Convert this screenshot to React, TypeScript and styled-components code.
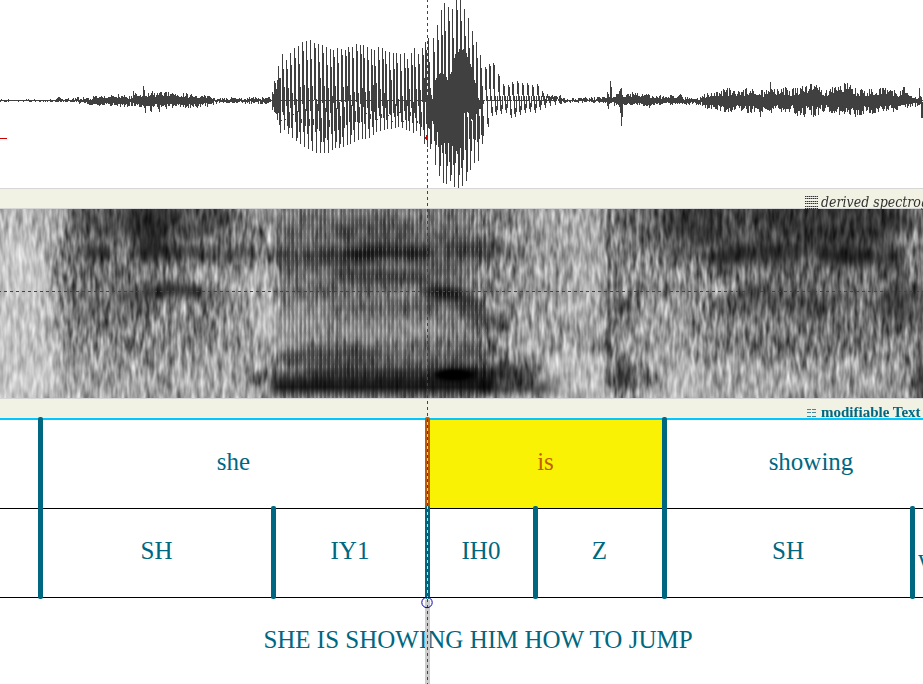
import React from "react";
import styled, { createGlobalStyle } from "styled-components";

const TEAL = "#006780";
const VIEW = 923;
const CURSOR = 427;
const pct = (n: number) => `${(n / VIEW) * 100}%`;

const GlobalStyle = createGlobalStyle`
  * { box-sizing: border-box; }
  body { margin: 0; background: #fff; overflow: hidden; }
`;

const Editor = styled.main`
  position: relative;
  display: flex;
  flex-direction: column;
  min-height: 100vh;
  overflow: hidden;
  background: #fff;
  color: ${TEAL};
  font-family: "Liberation Serif", serif;
`;

const Panel = styled.section<{ $height: number }>`
  position: relative;
  height: ${(p) => p.$height}px;
  flex: none;
`;

const Drawing = styled.svg`
  display: block;
  width: 100%;
  height: 100%;
`;

const GrainLayer = styled.g`
  mix-blend-mode: overlay;
`;

const Strip = styled.header<{ $framed?: boolean }>`
  position: relative;
  z-index: 1;
  display: flex;
  align-items: center;
  gap: 3px;
  height: ${(p) => (p.$framed ? 21 : 20)}px;
  padding-left: ${(p) => (p.$framed ? pct(805) : pct(807))};
  background: #f2f2e4;
  border-top: 1px solid #d6d6d6;
  border-bottom: ${(p) => (p.$framed ? "1px solid #d6d6d6" : "0")};
`;

const StripTitle = styled.h2<{ $derived?: boolean }>`
  margin: 0;
  flex: none;
  padding-top: ${(p) => (p.$derived ? 6 : 7)}px;
  padding-left: ${(p) => (p.$derived ? 0 : 1)}px;
  white-space: nowrap;
  line-height: 16px;
  font-size: ${(p) => (p.$derived ? 14 : 15)}px;
  font-style: ${(p) => (p.$derived ? "italic" : "normal")};
  font-weight: ${(p) => (p.$derived ? 400 : 700)};
  font-family: ${(p) => (p.$derived ? '"DejaVu Serif Condensed", "DejaVu Serif", serif' : '"Liberation Serif", serif')};
  color: ${(p) => (p.$derived ? "#333" : TEAL)};
`;

const StripIcon = styled.svg`
  flex: none;
  margin-top: 7px;
`;

const Tiers = styled.section`
  display: flex;
  flex-direction: column;
  flex: 1;
  border-top: 2px solid #00c8ff;
`;

const Tier = styled.div<{ $columns: number[] }>`
  display: grid;
  grid-template-columns: ${(p) => p.$columns.map(pct).join(" ")};
  height: 89px;
  border-bottom: 1px solid #000;
  &:last-child {
    flex: 1;
    height: auto;
    border-bottom: 0;
  }
`;

const Interval = styled.div<{ $selected?: boolean; $low?: boolean }>`
  position: relative;
  display: flex;
  justify-content: ${(p) => (p.$low ? "flex-start" : "center")};
  padding-top: ${(p) => (p.$low ? 36 : 28)}px;
  padding-left: ${(p) => (p.$low ? 6 : 0)}px;
  font-size: 25px;
  line-height: 28px;
  white-space: nowrap;
  background: ${(p) => (p.$selected ? "#faf205" : "transparent")};
  color: ${(p) => (p.$selected ? "#c06000" : TEAL)};
`;

const Boundary = styled.i<{ $active?: boolean }>`
  position: absolute;
  z-index: 1;
  left: -2px;
  top: -3px;
  bottom: -2px;
  width: 5px;
  border-radius: 2px;
  background: ${(p) => (p.$active ? "#c05a00" : TEAL)};
`;

const CursorShade = styled.i`
  position: absolute;
  left: calc(${pct(CURSOR)} - 2px);
  top: 600px;
  bottom: 0;
  width: 5px;
  background: #ccc;
`;

const CursorLine = styled.i`
  position: absolute;
  z-index: 3;
  left: ${pct(CURSOR)};
  top: 0;
  bottom: 0;
  width: 1px;
  background: repeating-linear-gradient(#c80a14 0 2px, transparent 2px 5px, #c80a14 5px 6px);
`;

const CursorGap = styled.i`
  position: absolute;
  z-index: 2;
  left: ${pct(CURSOR)};
  top: 420px;
  height: 180px;
  width: 1px;
  background: #faf205;
`;

const CursorRing = styled.svg`
  position: absolute;
  z-index: 4;
  left: calc(${pct(CURSOR)} - 6px);
  top: 596px;
`;

const FrequencyLine = styled.i`
  position: absolute;
  left: 0;
  right: 0;
  top: 82px;
  height: 1px;
  background: repeating-linear-gradient(90deg, #c80a14 0 1px, transparent 1px 4px, #c80a14 4px 6px);
`;

type Pair = [number, number];

function random(seed: number) {
  let s = seed;
  return () => {
    s = (s * 1664525 + 1013904223) % 4294967296;
    return s / 4294967296;
  };
}

function at(table: Pair[], x: number) {
  let i = 1;
  while (i < table.length - 1 && table[i][0] < x) i++;
  const [x0, y0] = table[i - 1];
  const [x1, y1] = table[i];
  const t = Math.min(1, Math.max(0, (x - x0) / (x1 - x0)));
  return y0 + (y1 - y0) * t;
}

/* Amplitudes above and below the zero line for the unvoiced stretches */
const noise: [number, number, number][] = [
  [0, 1, 1], [50, 1, 1], [60, 4, 2], [68, 2, 1], [85, 4, 4], [95, 5, 7], [105, 5, 5], [115, 6, 6],
  [122, 7, 7], [130, 4, 5], [133, 9, 6], [140, 8, 7], [142, 9, 8], [143, 15, 12], [145, 11, 15], [146, 8, 8], [152, 13, 12],
  [155, 5, 3], [159, 11, 13], [162, 10, 6], [165, 9, 8], [175, 8, 8], [185, 8, 7], [195, 6, 7], [210, 5, 7],
  [215, 3, 3], [250, 3, 3], [265, 4, 4], [270, 4, 5], [558, 3, 4], [566, 2, 2], [600, 4, 2], [606, 4, 2],
  [608, 16, 9], [609, 6, 5], [610, 22, 4], [612, 6, 4], [618, 8, 7], [620, 13, 18], [621, 13, 30], [622, 10, 18], [623, 5, 5],
  [632, 9, 5], [640, 7, 5], [648, 6, 8], [655, 5, 4], [680, 6, 5], [690, 3, 4], [700, 3, 5], [703, 7, 8],
  [715, 8, 9], [727, 13, 14], [740, 11, 11], [752, 14, 14], [759, 12, 19], [764, 10, 11], [770, 19, 20],
  [775, 10, 10], [782, 16, 12], [790, 11, 11], [803, 15, 20], [806, 19, 11], [814, 17, 17], [825, 10, 11],
  [835, 18, 14], [847, 18, 17], [856, 12, 18], [865, 11, 12], [880, 14, 15], [888, 14, 12], [899, 8, 11],
  [903, 16, 9], [910, 5, 6], [918, 4, 6],
];

/* Glottal pulse peaks and troughs of the voiced stretch */
const peaks: Pair[] = [
  [272, 92], [275, 83], [278, 66], [282, 54], [286, 60], [290, 53], [294, 48], [298, 46], [302, 42],
  [306, 41], [310, 40], [314, 43], [318, 44], [322, 45], [326, 47], [330, 49], [333, 50], [337, 48],
  [341, 49], [345, 50], [348, 47], [352, 47], [356, 44], [360, 45], [363, 45], [367, 47], [371, 49],
  [374, 50], [378, 47], [382, 48], [385, 51], [389, 52], [393, 53], [396, 53], [400, 54], [404, 53],
  [407, 59], [411, 53], [414, 48], [418, 54], [422, 48], [425, 42], [428, 38], [433, 38], [437, 25],
  [441, 10], [444, 3], [448, 7], [452, 9], [456, 0], [460, 0], [464, 9], [468, 18], [472, 31],
  [476, 42], [480, 55], [485, 67], [489, 64], [493, 63], [498, 74], [503, 84], [508, 85], [512, 82],
  [517, 81], [522, 83], [527, 83], [532, 85], [537, 84], [542, 91], [547, 94], [552, 95], [557, 97],
];
const troughs: Pair[] = [
  [272, 106], [277, 120], [281, 137], [285, 127], [289, 136], [293, 139], [297, 142], [301, 145],
  [309, 150], [316, 153], [328, 153], [335, 148], [343, 147], [351, 143], [359, 140], [370, 138],
  [377, 131], [389, 129], [397, 127], [404, 129], [413, 133], [417, 130], [425, 146], [431, 149],
  [435, 165], [439, 176], [444, 185], [450, 181], [455, 188], [459, 188], [465, 184], [469, 172],
  [474, 163], [478, 161], [482, 144], [486, 130], [491, 116], [505, 113], [510, 118], [515, 117],
  [525, 112], [534, 113], [543, 108], [552, 105], [558, 104],
];
const coreTop: Pair[] = [[427, 96], [432, 94], [436, 75], [441, 67], [449, 80], [452, 60], [456, 50], [460, 47], [464, 48], [470, 62], [474, 78], [478, 95], [484, 99]];
const coreBottom: Pair[] = [[427, 130], [433, 126], [438, 140], [441, 151], [449, 145], [453, 152], [461, 152], [462, 118], [468, 116], [474, 122], [478, 116], [484, 104]];

function waveform() {
  const rnd = random(41);
  const up: Pair[] = noise.map((n) => [n[0], n[1]]);
  const down: Pair[] = noise.map((n) => [n[0], n[2]]);
  let d = "";
  const column = (x: number, top: number, bottom: number) => {
    d += `M${x} ${Math.round(top)}h1V${Math.max(Math.round(bottom), Math.round(top) + 1)}h-1z`;
  };
  for (let x = 0; x < 920; x++) {
    if (x > 270 && x < 559) continue;
    const least = at(up, x) < 5 ? 0.1 : 0.35;
    column(x, 100.4 - at(up, x) * (least + rnd() * (1 - least)), 100.8 + at(down, x) * (least + rnd() * (1 - least)));
  }
  column(621, 88, 126);
  column(919, 88, 104);
  column(920, 96, 104);
  column(921, 97, 118);
  column(922, 102, 118);
  for (let i = 0; i < peaks.length; i++) {
    const [x, top] = peaks[i];
    const next = i + 1 < peaks.length ? peaks[i + 1][0] : x + 4;
    const low = at(troughs, x + 2);
    const jitter = rnd();
    if (x < 484) {
      column(x, top, 100 + jitter * 14);
      column(x + 1, top + (100 - top) * (0.08 + jitter * 0.3), low - (low - 100) * (0.2 + rnd() * 0.3));
      column(x + 2, 78 + rnd() * 30, low);
      if (next - x > 3) column(x + 3, 104 + jitter * 18, low - 3 - rnd() * 25);
    } else {
      column(x, top, top + (100 - top) * 0.7);
      column(x + 1, top + 2, 101);
      column(x + 2, 96, low - 3);
      column(x + 3, low - 9, low);
      if (next - x > 4) column(x + 4, 96, low - 5);
    }
  }
  for (let x = 427; x < 484; x++) column(x, at(coreTop, x) + rnd() * 6, at(coreBottom, x) - rnd() * 6);
  return d;
}

const WAVE = waveform();

type Blob = [number, number, number, number, number];

const darkBlobs: Blob[] = [
  [150, 8, 85, 24, 0.35], [150, 10, 24, 20, 0.45], [148, 40, 16, 14, 0.45], [165, 44, 34, 9, 0.45],
  [97, 44, 15, 9, 0.6], [205, 25, 60, 30, 0.22], [175, 81, 28, 7, 0.65], [140, 86, 20, 7, 0.4],
  [210, 85, 22, 7, 0.4], [115, 60, 65, 60, 0.18], [235, 47, 45, 8, 0.35], [284, 45, 8, 9, 0.6],
  [200, 115, 12, 30, 0.2], [259, 168, 18, 7, 0.45], [375, 22, 45, 14, 0.35], [310, 22, 35, 18, 0.15],
  [345, 46, 45, 8, 0.45], [390, 43, 50, 7, 0.75], [325, 53, 50, 13, 0.28], [380, 68, 50, 7, 0.5],
  [425, 52, 14, 30, 0.2], [400, 58, 60, 18, 0.1], [443, 84, 20, 7, 0.9], [464, 90, 12, 8, 0.5],
  [474, 101, 12, 11, 0.5], [493, 111, 18, 12, 0.3], [475, 40, 32, 12, 0.45], [450, 40, 12, 40, 0.15],
  [395, 99, 70, 6, 0.25], [310, 82, 60, 8, 0.15], [330, 148, 52, 12, 0.4], [420, 143, 80, 12, 0.15],
  [480, 150, 30, 20, 0.2], [420, 164, 120, 9, 0.5], [510, 164, 35, 10, 0.3], [622, 167, 5, 15, 0.6],
  [636, 168, 20, 12, 0.35], [628, 98, 12, 10, 0.4], [790, 12, 130, 34, 0.45], [670, 15, 55, 30, 0.28],
  [830, 8, 70, 24, 0.28], [675, 50, 15, 10, 0.3], [725, 48, 24, 8, 0.7], [775, 47, 30, 9, 0.5],
  [845, 48, 30, 8, 0.75], [885, 46, 20, 9, 0.5], [800, 55, 100, 25, 0.18], [765, 90, 45, 12, 0.3],
  [813, 98, 16, 14, 0.35], [840, 88, 14, 9, 0.3], [905, 95, 30, 20, 0.35], [895, 70, 14, 30, 0.25],
  [800, 110, 110, 40, 0.12], [921, 175, 5, 28, 0.7], [110, 120, 60, 50, 0.08], [510, 50, 20, 70, 0.1],
];

const lightBlobs: Blob[] = [
  [15, 120, 45, 90, 0.3], [35, 35, 30, 50, 0.15], [90, 170, 70, 30, 0.2], [215, 170, 50, 30, 0.2],
  [262, 90, 12, 40, 0.22], [540, 80, 50, 90, 0.12], [575, 175, 35, 35, 0.3],
  [590, 50, 18, 70, 0.18], [665, 170, 35, 30, 0.25], [660, 120, 50, 30, 0.12], [390, 122, 55, 12, 0.2],
  [290, 118, 40, 25, 0.2], [740, 175, 70, 25, 0.25], [860, 175, 60, 28, 0.2], [230, 67, 50, 8, 0.15],
  [455, 120, 25, 10, 0.1],
];

function Spectrogram() {
  return (
    <Drawing viewBox="0 0 923 189" preserveAspectRatio="none" role="img" aria-label="Spectrogram">
      <defs>
        <linearGradient id="base">
          <stop offset="0" stopColor="#aeaeae" />
          <stop offset=".04" stopColor="#a2a2a2" />
          <stop offset=".08" stopColor="#8c8c8c" />
          <stop offset=".25" stopColor="#8d8d8d" />
          <stop offset=".29" stopColor="#999" />
          <stop offset=".31" stopColor="#808080" />
          <stop offset=".5" stopColor="#7c7c7c" />
          <stop offset=".56" stopColor="#8e8e8e" />
          <stop offset=".65" stopColor="#949494" />
          <stop offset=".67" stopColor="#848484" />
          <stop offset=".72" stopColor="#8a8a8a" />
          <stop offset="1" stopColor="#7c7c7c" />
        </linearGradient>
        <linearGradient id="voiceBar" x1="0" y1="0" x2="0" y2="1">
          <stop offset="0" stopColor="#000" stopOpacity="0" />
          <stop offset=".45" stopColor="#000" stopOpacity=".7" />
          <stop offset=".65" stopColor="#000" stopOpacity=".82" />
          <stop offset="1" stopColor="#000" stopOpacity=".05" />
        </linearGradient>
        <filter id="soft" x="-50%" y="-50%" width="200%" height="200%" colorInterpolationFilters="sRGB">
          <feGaussianBlur stdDeviation="5 4" />
        </filter>
        <filter id="edge" x="-10%" y="-30%" width="120%" height="160%" colorInterpolationFilters="sRGB">
          <feGaussianBlur stdDeviation="3 1" />
        </filter>
        <filter id="barEdge" x="-10%" y="-10%" width="120%" height="120%" colorInterpolationFilters="sRGB">
          <feGaussianBlur stdDeviation="6 1" />
        </filter>
        <filter id="thin" x="-100%" y="-10%" width="300%" height="120%" colorInterpolationFilters="sRGB">
          <feGaussianBlur stdDeviation="1 3" />
        </filter>
        <filter id="grain" x="0" y="0" width="100%" height="100%" colorInterpolationFilters="sRGB">
          <feTurbulence type="fractalNoise" baseFrequency=".22 .055" numOctaves="2" seed="12" />
          <feColorMatrix values=".95 0 0 0 .04  .95 0 0 0 .04  .95 0 0 0 .04  0 0 0 0 1" />
        </filter>
        <pattern id="pulses" width="4" height="9" patternUnits="userSpaceOnUse">
          <rect width="2" height="9" fill="#000" opacity=".16" />
          <rect x="2" width="1" height="9" fill="#fff" opacity=".13" />
          <rect x="2" y="3" width="1" height="3" fill="#fff" opacity=".1" />
        </pattern>
        <mask id="voiced" maskUnits="userSpaceOnUse" x="0" y="0" width="923" height="189">
          <rect x="278" y="-20" width="212" height="230" fill="#fff" filter="url(#soft)" />
        </mask>
        <mask id="grainMask" maskUnits="userSpaceOnUse" x="0" y="0" width="923" height="189">
          <rect width="923" height="189" fill="#fff" />
          <rect x="280" y="-20" width="195" height="230" fill="#000" opacity=".4" filter="url(#soft)" />
        </mask>
      </defs>
      <rect width="923" height="189" fill="url(#base)" />
      <g filter="url(#soft)">
        {lightBlobs.map(([cx, cy, rx, ry, o], i) => (
          <ellipse key={i} cx={cx} cy={cy} rx={rx} ry={ry} fill="#fff" opacity={o} />
        ))}
      </g>
      <g filter="url(#soft)">
        {darkBlobs.map(([cx, cy, rx, ry, o], i) => (
          <ellipse key={i} cx={cx} cy={cy} rx={rx} ry={ry} fill="#000" opacity={o} />
        ))}
      </g>
      <g filter="url(#thin)">
        <rect x="607" y="-4" width="4" height="180" opacity=".45" />
        <rect x="618" y="40" width="4" height="140" opacity=".25" />
      </g>
      <GrainLayer mask="url(#grainMask)">
        <rect width="923" height="189" filter="url(#grain)" />
      </GrainLayer>
      <rect width="923" height="189" fill="url(#pulses)" mask="url(#voiced)" />
      <rect x="272" y="159" width="222" height="30" fill="url(#voiceBar)" filter="url(#edge)" />
      <rect x="480" y="163" width="76" height="26" fill="url(#voiceBar)" opacity=".6" filter="url(#barEdge)" />
      <ellipse cx="456" cy="166" rx="23" ry="7" filter="url(#soft)" />
      <ellipse cx="454" cy="166" rx="18" ry="5" filter="url(#edge)" />
    </Drawing>
  );
}

export default function App() {
  return (
    <>
      <GlobalStyle />
      <Editor>
        <Panel $height={188} aria-label="Sound">
          <Drawing viewBox="0 0 923 188" preserveAspectRatio="none" shapeRendering="crispEdges" role="img" aria-label="Waveform">
            <path d={WAVE} fill="#404040" />
            <path d="M0 100.5H923" stroke="#404040" strokeDasharray="8 1" />
            <path d="M0 138.5H7" stroke="#c80000" />
            <path d="M425 137h1v-2h2v5h-2v-1h-1z" fill="#d00000" />
          </Drawing>
        </Panel>
        <Strip $framed>
          <StripIcon width="13" height="13" shapeRendering="crispEdges" aria-hidden="true">
            <path d="M0 .5H13M0 2.5H13M0 5.5H13M0 7.5H13M0 10.5H13M0 12.5H13" stroke="#999" />
            <path d="M0 .5H13M0 2.5H13M0 5.5H13M0 7.5H13M0 10.5H13M0 12.5H13" stroke="#333" strokeDasharray="1 1" />
          </StripIcon>
          <StripTitle $derived>derived spectrog</StripTitle>
        </Strip>
        <Panel $height={189}>
          <Spectrogram />
          <FrequencyLine />
        </Panel>
        <Strip>
          <StripIcon width="10" height="9" shapeRendering="crispEdges" aria-hidden="true">
            <path d="M0 1.5H4M5 1.5H9M0 4.5H4M5 4.5H9M0 8.5H4M5 8.5H9" stroke="#46889a" />
          </StripIcon>
          <StripTitle>modifiable Text</StripTitle>
        </Strip>
        <Tiers>
          <Tier $columns={[40, 387, 237, 294]}>
            <Interval />
            <Interval><Boundary />she</Interval>
            <Interval $selected><Boundary $active />is</Interval>
            <Interval><Boundary />showing</Interval>
          </Tier>
          <Tier $columns={[40, 233, 154, 108, 129, 248, 40]}>
            <Interval />
            <Interval><Boundary />SH</Interval>
            <Interval><Boundary />IY1</Interval>
            <Interval><Boundary />IH0</Interval>
            <Interval><Boundary />Z</Interval>
            <Interval><Boundary />SH</Interval>
            <Interval $low><Boundary />w</Interval>
          </Tier>
          <Tier $columns={[33, 890]}>
            <Interval />
            <Interval>SHE IS SHOWING HIM HOW TO JUMP</Interval>
          </Tier>
        </Tiers>
        <CursorShade />
        <CursorGap />
        <CursorLine />
        <CursorRing width="13" height="13" aria-hidden="true">
          <circle cx="6" cy="6.5" r="5.2" fill="none" stroke="#0000b4" />
        </CursorRing>
      </Editor>
    </>
  );
}
